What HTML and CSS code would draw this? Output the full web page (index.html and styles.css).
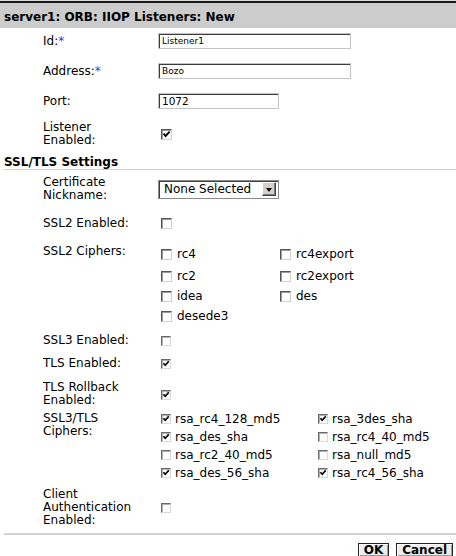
FILE: index.html
```html
<!DOCTYPE html>
<html>
<head>
<meta charset="utf-8">
<link rel="stylesheet" href="styles.css">
</head>
<body>
<div class="page">
  <div class="title">server1: ORB: IIOP Listeners: New</div>
  <div class="form">
    <div class="row r-id">
      <div class="label">Id:<span class="req">*</span></div>
      <div><input class="field wide" type="text" value="Listener1"></div>
    </div>
    <div class="row r-addr">
      <div class="label">Address:<span class="req">*</span></div>
      <div><input class="field wide" type="text" value="Bozo"></div>
    </div>
    <div class="row r-port">
      <div class="label">Port:</div>
      <div><input class="field narrow port" type="text" value="1072"></div>
    </div>
    <div class="row r-listen">
      <div class="label">Listener<br>Enabled:</div>
      <div><span class="cb on"><svg viewBox="0 0 9 9"><path d="M1.6 3.6 L3.6 6 L7.6 1.6"/></svg></span></div>
    </div>

    <div class="section">SSL/TLS Settings</div>

    <div class="row r-cert">
      <div class="label">Certificate<br>Nickname:</div>
      <div><div class="select"><span class="sel-text">None Selected</span><span class="sel-btn"><span class="tri"></span></span></div></div>
    </div>
    <div class="row r-ssl2">
      <div class="label">SSL2 Enabled:</div>
      <div><span class="cb"></span></div>
    </div>
    <div class="row r-ssl2c top">
      <div class="label">SSL2 Ciphers:</div>
      <div class="ciphers2">
        <div class="opt"><span class="cb"></span>rc4</div>
        <div class="opt"><span class="cb"></span>rc4export</div>
        <div class="opt"><span class="cb"></span>rc2</div>
        <div class="opt"><span class="cb"></span>rc2export</div>
        <div class="opt"><span class="cb"></span>idea</div>
        <div class="opt"><span class="cb"></span>des</div>
        <div class="opt"><span class="cb"></span>desede3</div>
      </div>
    </div>
    <div class="row r-ssl3 small">
      <div class="label">SSL3 Enabled:</div>
      <div><span class="cb dim"></span></div>
    </div>
    <div class="row r-tls small">
      <div class="label">TLS Enabled:</div>
      <div><span class="cb on dim"><svg viewBox="0 0 9 9"><path d="M1.6 3.6 L3.6 6 L7.6 1.6"/></svg></span></div>
    </div>
    <div class="row r-roll small">
      <div class="label">TLS Rollback<br>Enabled:</div>
      <div><span class="cb on dim"><svg viewBox="0 0 9 9"><path d="M1.6 3.6 L3.6 6 L7.6 1.6"/></svg></span></div>
    </div>
    <div class="row r-ssl3c top small">
      <div class="label">SSL3/TLS<br>Ciphers:</div>
      <div class="ciphers3">
        <div class="opt"><span class="cb on dim"><svg viewBox="0 0 9 9"><path d="M1.6 3.6 L3.6 6 L7.6 1.6"/></svg></span>rsa_rc4_128_md5</div>
        <div class="opt"><span class="cb on dim"><svg viewBox="0 0 9 9"><path d="M1.6 3.6 L3.6 6 L7.6 1.6"/></svg></span>rsa_3des_sha</div>
        <div class="opt"><span class="cb on dim"><svg viewBox="0 0 9 9"><path d="M1.6 3.6 L3.6 6 L7.6 1.6"/></svg></span>rsa_des_sha</div>
        <div class="opt"><span class="cb dim"></span>rsa_rc4_40_md5</div>
        <div class="opt"><span class="cb dim"></span>rsa_rc2_40_md5</div>
        <div class="opt"><span class="cb dim"></span>rsa_null_md5</div>
        <div class="opt"><span class="cb on dim"><svg viewBox="0 0 9 9"><path d="M1.6 3.6 L3.6 6 L7.6 1.6"/></svg></span>rsa_des_56_sha</div>
        <div class="opt"><span class="cb on dim"><svg viewBox="0 0 9 9"><path d="M1.6 3.6 L3.6 6 L7.6 1.6"/></svg></span>rsa_rc4_56_sha</div>
      </div>
    </div>
    <div class="row r-client small">
      <div class="label client">Client<br>Authentication<br>Enabled:</div>
      <div><span class="cb dim"></span></div>
    </div>

    <div class="rule"></div>
    <div class="actions">
      <button class="btn" type="button">OK</button>
      <button class="btn" type="button">Cancel</button>
    </div>
  </div>
</div>
</body>
</html>
```
FILE: styles.css
```css
* { box-sizing: border-box; }

body {
  margin: 0;
  background: #fff;
  color: #000;
  font-family: "DejaVu Sans", Verdana, sans-serif;
  font-size: 12px;
}

.page {
  width: 456px;
  border-top: 1px solid #d8d8d8;
}

.title {
  height: 27px;
  border-top: 2px solid #1a1a1a;
  background: #cccccc;
  padding: 4px 0 0 4px;
  line-height: 20px;
  font-weight: bold;
  white-space: nowrap;
}

.row {
  display: grid;
  grid-template-columns: 115px 1fr;
  align-items: center;
  padding-left: 43px;
}
.row.top { align-items: start; }

.label { line-height: 13px; }
.req { color: #1f3fe0; }

.r-id { margin-top: 5px; }
.r-addr, .r-port { margin-top: 14px; }
.r-listen { margin-top: 12px; }
.r-cert { margin-top: 6px; }
.r-ssl2 { margin-top: 14px; }
.r-ssl2c { margin-top: 14px; }
.r-ssl2c .label { padding-top: 1px; }
.r-ssl3 { margin-top: 7px; }
.r-tls { margin-top: 9px; }
.r-roll { margin-top: 11px; }
.r-ssl3c { margin-top: 3px; }
.r-ssl3c .label { padding-top: 2px; }
.r-client { margin-top: 6px; }

.field {
  display: block;
  height: 16px;
  margin: 0;
  padding: 0 3px;
  border: 1px solid #c4c4c4;
  box-shadow: inset 1px 1px 0 #3c3c3c;
  background: #fff;
  font-family: "DejaVu Sans", Verdana, sans-serif;
  font-size: 9px;
  color: #000;
  outline: none;
  -webkit-appearance: none;
  appearance: none;
}
.field.wide { width: 193px; }
.field.narrow { width: 121px; }
.field.port { font-size: 10.5px; }

.section {
  margin: 9px 0 0 4px;
  line-height: 13px;
  font-weight: bold;
  border-bottom: 1px solid #cfcfcf;
}

.select {
  display: flex;
  align-items: center;
  width: 121px;
  height: 19px;
  border: 1px solid #8a8a8a;
  box-shadow: inset 1px 1px 0 #404040;
  background: #fff;
  padding: 0 2px 0 5px;
}
.sel-text { flex: 1; line-height: 15px; white-space: nowrap; }
.sel-btn {
  width: 14px;
  height: 14px;
  display: flex;
  align-items: center;
  justify-content: center;
  background: #d4d0c8;
  border: 1px solid;
  border-color: #fff #404040 #404040 #fff;
  box-shadow: inset -1px -1px 0 #808080;
}
.tri {
  width: 0;
  height: 0;
  border-left: 3.5px solid transparent;
  border-right: 3.5px solid transparent;
  border-top: 4px solid #000;
  margin-top: 1px;
}

.cb {
  display: inline-flex;
  align-items: center;
  justify-content: center;
  flex: none;
  width: 11px;
  height: 11px;
  margin-left: 3px;
  vertical-align: middle;
  background: #fff;
  border: 1px solid;
  border-color: #555 #d0d0d0 #d0d0d0 #555;
  box-shadow: inset 1px 1px 0 #9a9a9a;
}
.cb svg { width: 9px; height: 9px; display: block; }
.cb svg path { fill: none; stroke: #000; stroke-width: 1.9; }
.small .cb { width: 10px; height: 10px; }
.small .cb svg { width: 8px; height: 8px; }
.cb.dim { border-color: #6a6a6a #d8d8d8 #d8d8d8 #6a6a6a; box-shadow: inset 1px 1px 0 #b0b0b0; }

.ciphers2 {
  display: grid;
  grid-template-columns: 119px 1fr;
  grid-template-rows: 22px 20px 20px 20px;
}
.ciphers3 {
  display: grid;
  grid-template-columns: 157px 1fr;
  grid-auto-rows: 18px;
}
.opt {
  display: flex;
  align-items: center;
  height: 20px;
  white-space: nowrap;
}
.ciphers3 .opt { height: 18px; }
.opt .cb { margin-right: 5px; }
.ciphers3 .opt .cb { margin-right: 4px; }

.rule {
  margin: 6px 0 0 4px;
  border-top: 2px solid #d2d2d2;
}

.actions {
  display: flex;
  justify-content: flex-end;
  gap: 7px;
  margin-top: 8px;
  padding-right: 3px;
}
.btn {
  height: 14px;
  margin: 0;
  padding: 0 5px;
  border: 1px solid #222;
  background: #ececec;
  box-shadow: inset 1px 1px 0 #fff, inset -1px -1px 0 #9a9a9a;
  font-family: "DejaVu Sans", Verdana, sans-serif;
  font-size: 12px;
  font-weight: bold;
  line-height: 12px;
  color: #000;
}
```
